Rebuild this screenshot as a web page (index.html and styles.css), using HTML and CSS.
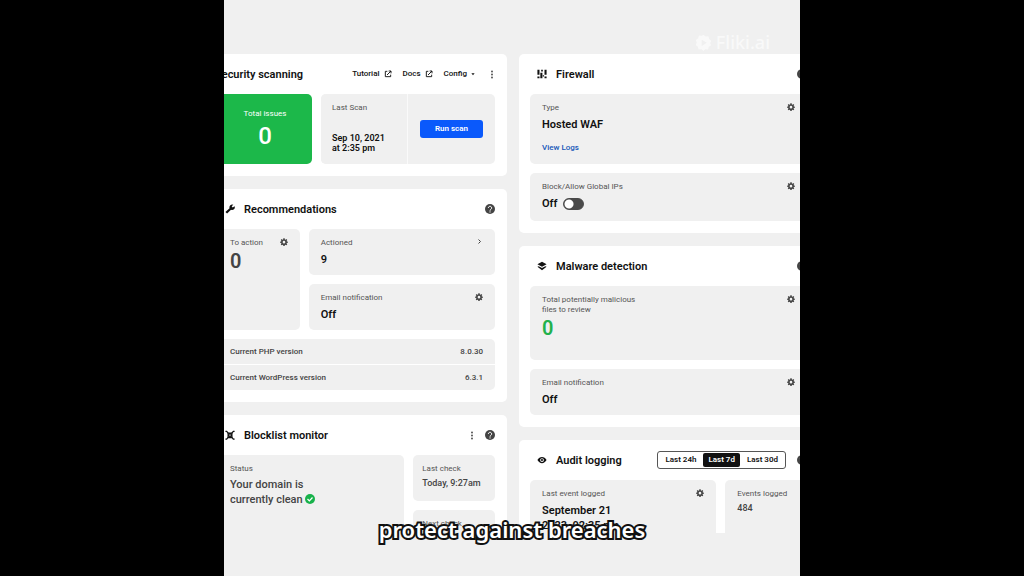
FILE: index.html
```
<!DOCTYPE html>
<html lang="en">
<head>
<meta charset="utf-8">
<title>Security dashboard</title>
<link rel="stylesheet" href="styles.css">
</head>
<body>
<svg class="defs" aria-hidden="true">
  <symbol id="gear" viewBox="0 0 24 24"><path fill-rule="evenodd" d="M10 1h4l.6 3.300 1.800.8L19.200 3.200l2.600 2.600-1.900 2.800.8 1.800L24 11v3l-3.300.6-.8 1.800 1.900 2.800-2.600 2.600-2.800-1.900-1.800.8L14 24h-4l-.6-3.300-1.800-.8-2.800 1.900-2.600-2.600 1.900-2.800-.8-1.800L0 14v-3l3.300-.6.8-1.800-1.900-2.800 2.600-2.600 2.800 1.900 1.800-.8zM12 8.500a4 4 0 1 0 0 8 4 4 0 0 0 0-8z"/></symbol>
  <symbol id="help" viewBox="0 0 24 24"><circle cx="12" cy="12" r="12"/><path d="M8 9.500a4 4 0 1 1 6.200 3.300C12.700 13.800 12 14.300 12 16" fill="none" stroke="#fff" stroke-width="2.400"/><circle cx="12" cy="19" r="1.500" fill="#fff"/></symbol>
  <symbol id="dots" viewBox="0 0 8 24"><circle cx="4" cy="4" r="2.400"/><circle cx="4" cy="12" r="2.400"/><circle cx="4" cy="20" r="2.400"/></symbol>
  <symbol id="open" viewBox="0 0 24 24"><path d="M10 4H4v16h16v-6M14 3h7v7M21 3L9 15" fill="none" stroke="currentColor" stroke-width="2.800"/></symbol>
</svg>
<main class="stage">
  <div class="board">
    <div class="column">
      <section class="card">
        <header class="head">
          <h2 class="title lead">Security scanning</h2>
          <nav class="tools">
            <a class="tool" href="#">Tutorial <svg class="icon-s"><use href="#open"/></svg></a>
            <a class="tool" href="#">Docs <svg class="icon-s"><use href="#open"/></svg></a>
            <button class="tool" type="button">Config <svg class="caret" viewBox="0 0 10 10"><path d="M1 3h8L5 8z"/></svg></button>
            <button class="icon-button more" type="button" aria-label="More"><svg class="dots"><use href="#dots"/></svg></button>
          </nav>
        </header>
        <div class="grid scan">
          <div class="tile issues"><p class="label">Total issues</p><p class="count">0</p></div>
          <div class="last-scan">
            <div class="tile scan-date"><p class="label">Last Scan</p><p class="date">Sep 10, 2021<br>at 2:35 pm</p></div>
            <div class="scan-action"><button class="run" type="button">Run scan</button></div>
          </div>
        </div>
      </section>

      <section class="card">
        <header class="head">
          <svg class="badge" viewBox="0 0 24 24"><path d="M1 19 11 10a6.500 6.500 0 0 1 9-8l-4 3.500 2.500 3 4.500-3a6.500 6.500 0 0 1-8.500 8.500L5 23z"/></svg>
          <h2 class="title">Recommendations</h2>
          <button class="icon-button" type="button" aria-label="Help"><svg class="icon help"><use href="#help"/></svg></button>
        </header>
        <div class="grid narrow-wide">
          <div class="tile">
            <div class="row"><p class="label">To action</p><button class="icon-button" type="button" aria-label="Settings"><svg class="icon-s"><use href="#gear"/></svg></button></div>
            <p class="count grey">0</p>
          </div>
          <div class="stack">
            <div class="tile">
              <div class="row"><p class="label">Actioned</p><button class="icon-button" type="button" aria-label="Open actioned"><svg class="chevron" viewBox="0 0 10 10"><path d="M3 1l4 4-4 4" fill="none" stroke="currentColor" stroke-width="2"/></svg></button></div>
              <p class="value">9</p>
            </div>
            <div class="tile">
              <div class="row"><p class="label">Email notification</p><button class="icon-button" type="button" aria-label="Settings"><svg class="icon-s"><use href="#gear"/></svg></button></div>
              <p class="value">Off</p>
            </div>
          </div>
        </div>
        <dl class="versions">
          <div class="version"><dt>Current PHP version</dt><dd>8.0.30</dd></div>
          <div class="version"><dt>Current WordPress version</dt><dd>6.3.1</dd></div>
        </dl>
      </section>

      <section class="card">
        <header class="head">
          <svg class="badge" viewBox="0 0 24 24"><path d="M6 6h12v12l-2 2H8l-2-2z"/><path d="M1 3h3l4 5M23 3h-3l-4 5M1 22h3l4-5M23 22h-3l-4-5" fill="none" stroke="currentColor" stroke-width="3"/><path d="M9 10l6 5M15 10l-6 5" stroke="#fff" stroke-width="1"/></svg>
          <h2 class="title">Blocklist monitor</h2>
          <div class="tools">
            <button class="icon-button" type="button" aria-label="More"><svg class="dots"><use href="#dots"/></svg></button>
            <button class="icon-button" type="button" aria-label="Help"><svg class="icon help"><use href="#help"/></svg></button>
          </div>
        </header>
        <div class="grid wide-narrow">
          <div class="tile tall">
            <p class="label">Status</p>
            <p class="status">Your domain is<br>currently clean <svg class="check" viewBox="0 0 24 24"><circle cx="12" cy="12" r="12" fill="#18b24b"/><path d="M6 12l4.500 4.500L18 8.500" fill="none" stroke="#fff" stroke-width="3"/></svg></p>
          </div>
          <div class="stack">
            <div class="tile tight"><p class="label">Last check</p><p class="small-value">Today, 9:27am</p></div>
            <div class="tile tight"><p class="label">Next check</p></div>
          </div>
        </div>
      </section>
    </div>

    <div class="column">
      <section class="card">
        <header class="head">
          <svg class="badge" viewBox="0 0 24 24"><path d="M1 2h5v12H1zM1 18h5v4H1zM10 2h4v4h-4zM8 9h5v13H8zM18 2h5v12h-5zM18 18h5v4h-5zM14 15h3v3h-3z"/></svg>
          <h2 class="title">Firewall</h2>
          <button class="icon-button" type="button" aria-label="Help"><svg class="icon help"><use href="#help"/></svg></button>
        </header>
        <div class="stack">
          <div class="tile medium">
            <div class="row"><p class="label">Type</p><button class="icon-button" type="button" aria-label="Settings"><svg class="icon-s"><use href="#gear"/></svg></button></div>
            <p class="value">Hosted WAF</p>
            <a class="link" href="#">View Logs</a>
          </div>
          <div class="tile switch-tile">
            <div class="row"><p class="label">Block/Allow Global IPs</p><button class="icon-button" type="button" aria-label="Settings"><svg class="icon-s"><use href="#gear"/></svg></button></div>
            <label class="value switch-row">Off <input class="switch" type="checkbox"></label>
          </div>
        </div>
      </section>

      <section class="card">
        <header class="head">
          <svg class="badge" viewBox="0 0 24 24"><path d="M12 2l11 6-11 6L1 8z"/><path d="M1 14l3-1.500 8 4.500 8-4.500 3 1.500-11 8z"/></svg>
          <h2 class="title">Malware detection</h2>
          <button class="icon-button" type="button" aria-label="Help"><svg class="icon help"><use href="#help"/></svg></button>
        </header>
        <div class="stack">
          <div class="tile large">
            <div class="row"><p class="label">Total potentially malicious<br>files to review</p><button class="icon-button" type="button" aria-label="Settings"><svg class="icon-s"><use href="#gear"/></svg></button></div>
            <p class="count green">0</p>
          </div>
          <div class="tile">
            <div class="row"><p class="label">Email notification</p><button class="icon-button" type="button" aria-label="Settings"><svg class="icon-s"><use href="#gear"/></svg></button></div>
            <p class="value">Off</p>
          </div>
        </div>
      </section>

      <section class="card">
        <header class="head">
          <svg class="badge" viewBox="0 0 24 24"><path fill-rule="evenodd" d="M1 12c5-10 17-10 22 0-5 10-17 10-22 0zm11-4.500a4.500 4.500 0 1 0 0 9 4.500 4.500 0 0 0 0-9z"/><circle cx="12" cy="12" r="2.500"/></svg>
          <h2 class="title">Audit logging</h2>
          <div class="tools">
            <div class="segments">
              <button class="segment" type="button">Last 24h</button>
              <button class="segment active" type="button" aria-pressed="true">Last 7d</button>
              <button class="segment" type="button">Last 30d</button>
            </div>
            <button class="icon-button" type="button" aria-label="Help"><svg class="icon help"><use href="#help"/></svg></button>
          </div>
        </header>
        <div class="grid wide-narrow">
          <div class="tile tall">
            <div class="row"><p class="label">Last event logged</p><button class="icon-button" type="button" aria-label="Settings"><svg class="icon-s"><use href="#gear"/></svg></button></div>
            <p class="value">September 21<br>2023, 02:35 pm</p>
          </div>
          <div class="tile tall"><p class="label">Events logged</p><p class="small-value">484</p></div>
        </div>
      </section>
    </div>
  </div>

  <div class="watermark"><svg class="mark" viewBox="0 0 24 24"><path fill-rule="evenodd" d="M12 1l3 2.500 4-.5 1 4 3 2.500-1.500 3.500L23 16l-3.500 2-1 4-4-.5L12 24l-3-2.500-4 .5-1-4-3-2.500L2.500 12 1 8.500 4.500 6l1-4 4 .5zM9.500 8v9l7-4.500z"/></svg>Fliki.ai</div>
  <p class="caption">protect against breaches</p>
</main>
</body>
</html>
```
FILE: styles.css
```
* { box-sizing: border-box; }
body {
  margin: 0;
  background: #000;
  color: #111;
  font-family: Roboto, "Liberation Sans", sans-serif;
  font-size: 8px;
  line-height: 10px;
}
p, h2, dl, dd { margin: 0; }
button {
  border: 0;
  padding: 0;
  background: none;
  color: inherit;
  font: inherit;
}
a { text-decoration: none; color: inherit; }
svg { fill: currentColor; flex: none; }
.defs { display: none; }

.stage {
  position: relative;
  display: flex;
  height: 100vh;
  aspect-ratio: 1;
  margin: 0 auto;
  padding: 54px 0 43px;
  overflow: hidden;
  background: #f0f0f0;
}
.board {
  flex: 1;
  display: grid;
  grid-template-columns: 1fr 1fr;
  gap: 12px;
  margin: 0 -19px 0 -17px;
  overflow: hidden;
}
.column { display: flex; flex-direction: column; gap: 13px; min-height: 0; }
.card {
  flex: none;
  padding: 0 12px 12px 11px;
  border-radius: 5px;
  background: #fff;
}
.head { display: flex; align-items: center; height: 40px; }
.head > .icon-button, .tools { margin-left: auto; }
.title { padding-top: 1px; font-size: 11px; line-height: 14px; font-weight: 600; white-space: nowrap; }
.lead { margin-left: -3px; }
.badge { width: 10px; height: 10px; margin: 0 9px 0 7px; }
.tools { display: flex; align-items: center; gap: 11px; }
.tool { display: flex; align-items: center; gap: 4px; font-size: 8px; font-weight: 500; }

.icon { width: 10px; height: 10px; }
.icon-s { width: 8px; height: 8px; }
.dots { width: 4px; height: 9px; }
.more { margin: 0 1px 0 4px; }
.help { color: #444; }
.caret { width: 4px; height: 4px; }
.chevron { width: 5px; height: 5px; margin: 1px; }
.icon-button { display: flex; color: #444; }

.grid { display: grid; gap: 9px; }
.scan { grid-template-columns: minmax(0, 94fr) minmax(0, 174fr); }
.narrow-wide { grid-template-columns: minmax(0, 82fr) minmax(0, 187fr); }
.wide-narrow { grid-template-columns: minmax(0, 187fr) minmax(0, 82fr); }
.stack { display: flex; flex-direction: column; gap: 9px; }

.tile {
  min-height: 46px;
  padding: 9px 12px 7px;
  border-radius: 5px;
  background: #f0f0f0;
}
.tile.tight { padding-left: 9px; padding-right: 0; }
.tile.medium { min-height: 70px; }
.tile.large { min-height: 74px; }
.tile.tall { min-height: 90px; }
.tile.switch-tile { min-height: 48px; }
.row { display: flex; justify-content: space-between; align-items: flex-start; }
.label { color: #555; font-size: 8px; font-weight: 400; white-space: nowrap; }
.value { margin-top: 4px; font-size: 11px; line-height: 15px; font-weight: 600; }
.small-value { margin-top: 4px; color: #444; font-size: 9px; font-weight: 500; }
.status { margin-top: 3px; color: #444; font-size: 11px; line-height: 15px; font-weight: 500; }
.check { width: 10px; height: 10px; vertical-align: -1px; }
.count { font-size: 20px; line-height: 26px; font-weight: 600; }
.grey { color: #444; }
.green { color: #22b14c; }
.link { display: block; margin-top: 11px; color: #1557b8; font-size: 8px; font-weight: 500; }

.issues {
  padding: 15px 0 0;
  background: #1cb84a;
  color: #fff;
  text-align: center;
}
.issues .label { color: #fff; }
.issues .count { margin-top: 4px; font-size: 24px; font-weight: 500; }
.last-scan {
  display: grid;
  grid-template-columns: 1fr 1fr;
  min-height: 70px;
  border-radius: 5px;
  overflow: hidden;
  background: #f0f0f0;
}
.scan-date { padding-left: 11px; padding-right: 0; border-right: 1px solid #fafafa; border-radius: 0; }
.date { margin-top: 20px; font-size: 9px; font-weight: 600; white-space: nowrap; }
.scan-action { display: grid; place-items: center; }
.run {
  width: 63px;
  height: 18px;
  border-radius: 3px;
  background: #0a59fb;
  color: #fff;
  font-size: 8px;
  font-weight: 600;
}

.versions {
  display: grid;
  gap: 1px;
  margin-top: 9px;
  border-radius: 5px;
  overflow: hidden;
}
.version {
  display: flex;
  justify-content: space-between;
  align-items: center;
  height: 25px;
  padding: 0 12px;
  background: #f0f0f0;
  color: #444;
  font-size: 8px;
  font-weight: 500;
}

.switch-row { display: flex; align-items: center; gap: 6px; }
.switch {
  appearance: none;
  width: 21px;
  height: 12px;
  margin: 0;
  border: 1px solid #4a4a4a;
  border-radius: 6px;
  background: radial-gradient(circle at 5px 5px, #fff 4px, #4a4a4a 5px);
}

.segments {
  display: flex;
  height: 18px;
  border: 1px solid #555;
  border-radius: 3px;
}
.segment { padding: 0 7px; font-size: 8px; font-weight: 600; white-space: nowrap; }
.segment.active { margin: 1px 0; padding: 0 5px; border-radius: 2px; background: #111; color: #fff; }

.watermark {
  position: absolute;
  top: 32px;
  right: 30px;
  display: flex;
  align-items: center;
  gap: 4px;
  color: #fff;
  font-family: "Noto Sans", sans-serif;
  font-size: 18px;
  line-height: 20px;
  font-weight: 500;
  opacity: 0.6;
}
.mark { width: 17px; height: 17px; }
.caption {
  position: absolute;
  left: 0;
  right: 0;
  bottom: 33px;
  color: #fff;
  font-family: "Noto Sans", sans-serif;
  font-size: 22px;
  line-height: 28px;
  font-weight: 600;
  text-align: center;
  -webkit-text-stroke: 4px #111;
  paint-order: stroke fill;
}
```
